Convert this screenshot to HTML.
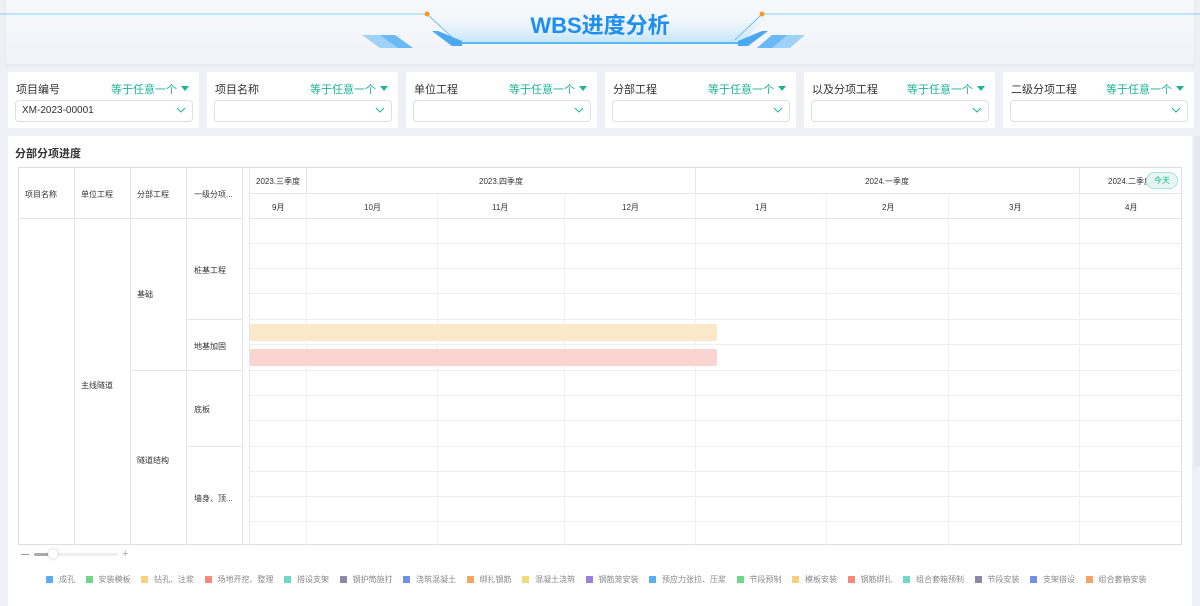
<!DOCTYPE html>
<html><head><meta charset="utf-8"><style>
*{box-sizing:border-box;margin:0;padding:0}
body{width:1200px;height:598px;overflow:hidden;background:#eef0f5;font-family:"Liberation Sans","Noto Sans CJK SC",sans-serif;position:relative;color:#333}
.abs{position:absolute}
.hdr{left:6px;top:0;width:1188px;height:64px;background:linear-gradient(#f6f8fb,#f0f3f8);box-shadow:0 1px 3px rgba(0,0,0,.05)}
.card{top:72px;width:191px;height:56px;background:#fff;border-radius:2px}
.card .lb{position:absolute;left:8px;top:9px;font-size:11px;color:#333}
.card .op{position:absolute;right:10px;top:9px;font-size:11px;color:#1fb39a}
.card .op:after{content:"";display:inline-block;margin-left:4px;border:4px solid transparent;border-top:5px solid #1fb39a;border-bottom:0;vertical-align:2px}
.card .sel{position:absolute;left:7px;top:28px;width:178px;height:22px;border:1px solid #dcdfe6;border-radius:4px;font-size:10px;padding:4px 6px;color:#333}
.card .sel svg{position:absolute;right:6px;top:6px}
.panel{left:8px;top:136px;width:1184px;height:470px;background:#fff}
.tt{left:15px;top:145px;font-size:11px;font-weight:bold;color:#333}
.tbl{left:18px;top:167px;width:1164px;height:378px;border:1px solid #dcdfe6}
.t{position:absolute;font-size:8px;color:#333;white-space:nowrap}
.vl{position:absolute;width:1px;background:#e4e6eb}
.hl{position:absolute;height:1px;background:#eceef2}
.leg{top:574px;font-size:8px;color:#888;white-space:nowrap}
.leg span{display:inline-block;margin-right:10.5px}
.leg i{display:inline-block;width:7px;height:7px;margin-right:6px;vertical-align:-1px}
</style></head><body>
<div class="abs hdr"></div>
<svg class="abs" style="left:0;top:0" width="1200" height="64">
<defs><linearGradient id="g1" x1="0" x2="0" y1="0" y2="1"><stop offset="0" stop-color="#e8f4fd" stop-opacity="0"/><stop offset="1" stop-color="#bfe3fb"/></linearGradient></defs>
<polygon points="430,14 770,14 740,44 460,44" fill="url(#g1)"/>
<line x1="0" y1="14" x2="427" y2="14" stroke="#8fd0f5" stroke-width="1"/>
<line x1="762" y1="14" x2="1200" y2="14" stroke="#8fd0f5" stroke-width="1"/>
<line x1="427" y1="14" x2="455" y2="40" stroke="#6fc0f0"/>
<line x1="762" y1="14" x2="735" y2="40" stroke="#6fc0f0"/>
<circle cx="427" cy="14" r="2.5" fill="#f39b21"/><circle cx="762" cy="14" r="2.5" fill="#f39b21"/>
<line x1="462" y1="43" x2="738" y2="43" stroke="#3aa8f5" stroke-width="1.5"/>
<polygon points="432,31 438,31 462,41 462,46 452,46" fill="#4aa8f0"/>
<polygon points="768,31 762,31 738,41 738,46 748,46" fill="#4aa8f0"/>
<polygon points="362,35 395,35 413,48 380,48" fill="#9ed2f8"/>
<polygon points="380,35 395,35 413,48 398,48" fill="#6ab8f4"/>
<polygon points="772,35 805,35 790,48 757,48" fill="#9ed2f8"/>
<polygon points="772,35 787,35 772,48 757,48" fill="#6ab8f4"/>
<text x="600" y="33" text-anchor="middle" font-size="22" font-weight="bold" fill="#1e8ef0" font-family="Liberation Sans,Noto Sans CJK SC,sans-serif">WBS进度分析</text>
</svg>

<div class="abs card" style="left:8px"><div class="lb">项目编号</div><div class="op">等于任意一个</div><div class="sel">XM-2023-00001<svg width="10" height="7"><path d="M1 1l4 4 4-4" stroke="#1fb39a" fill="none"/></svg></div></div>
<div class="abs card" style="left:207px"><div class="lb">项目名称</div><div class="op">等于任意一个</div><div class="sel"><svg width="10" height="7"><path d="M1 1l4 4 4-4" stroke="#1fb39a" fill="none"/></svg></div></div>
<div class="abs card" style="left:406px"><div class="lb">单位工程</div><div class="op">等于任意一个</div><div class="sel"><svg width="10" height="7"><path d="M1 1l4 4 4-4" stroke="#1fb39a" fill="none"/></svg></div></div>
<div class="abs card" style="left:605px"><div class="lb">分部工程</div><div class="op">等于任意一个</div><div class="sel"><svg width="10" height="7"><path d="M1 1l4 4 4-4" stroke="#1fb39a" fill="none"/></svg></div></div>
<div class="abs card" style="left:804px"><div class="lb">以及分项工程</div><div class="op">等于任意一个</div><div class="sel"><svg width="10" height="7"><path d="M1 1l4 4 4-4" stroke="#1fb39a" fill="none"/></svg></div></div>
<div class="abs card" style="left:1003px"><div class="lb">二级分项工程</div><div class="op">等于任意一个</div><div class="sel"><svg width="10" height="7"><path d="M1 1l4 4 4-4" stroke="#1fb39a" fill="none"/></svg></div></div>

<div class="abs panel"></div>
<div class="abs" style="left:1194px;top:136px;width:6px;height:330px;background:#e6e8ec"></div>
<div class="abs tt">分部分项进度</div>
<div class="abs tbl">
<div class="vl" style="left:55px;top:0;height:377px"></div>
<div class="vl" style="left:111px;top:0;height:377px"></div>
<div class="vl" style="left:167px;top:0;height:377px"></div>
<div class="vl" style="left:223px;top:0;height:377px"></div>
<div class="vl" style="left:230px;top:0;height:377px"></div>
<div class="hl" style="left:0;top:50px;width:224px;background:#e4e6eb"></div>
<div class="hl" style="left:111px;top:202px;width:113px;background:#e4e6eb"></div>
<div class="hl" style="left:167px;top:151px;width:57px;background:#e4e6eb"></div>
<div class="hl" style="left:167px;top:278px;width:57px;background:#e4e6eb"></div>
<div class="t" style="left:6px;top:21px">项目名称</div>
<div class="t" style="left:62px;top:21px">单位工程</div>
<div class="t" style="left:118px;top:21px">分部工程</div>
<div class="t" style="left:175px;top:21px">一级分项...</div>
<div class="t" style="left:62px;top:212px">主线隧道</div>
<div class="t" style="left:118px;top:121px">基础</div>
<div class="t" style="left:118px;top:287px">隧道结构</div>
<div class="t" style="left:175px;top:97px">桩基工程</div>
<div class="t" style="left:175px;top:173px">地基加固</div>
<div class="t" style="left:175px;top:236px">底板</div>
<div class="t" style="left:175px;top:325px">墙身、顶...</div>
<div class="hl" style="left:231px;top:25px;width:933px;background:#e4e6eb"></div>
<div class="hl" style="left:231px;top:50px;width:933px;background:#e4e6eb"></div>
<div class="hl" style="left:231px;top:75px;width:933px"></div>
<div class="hl" style="left:231px;top:100px;width:933px"></div>
<div class="hl" style="left:231px;top:125px;width:933px"></div>
<div class="hl" style="left:231px;top:151px;width:933px"></div>
<div class="hl" style="left:231px;top:176px;width:933px"></div>
<div class="hl" style="left:231px;top:202px;width:933px"></div>
<div class="hl" style="left:231px;top:227px;width:933px"></div>
<div class="hl" style="left:231px;top:252px;width:933px"></div>
<div class="hl" style="left:231px;top:278px;width:933px"></div>
<div class="hl" style="left:231px;top:303px;width:933px"></div>
<div class="hl" style="left:231px;top:328px;width:933px"></div>
<div class="hl" style="left:231px;top:353px;width:933px"></div>
<div class="vl" style="left:287px;top:0;height:25px"></div>
<div class="vl" style="left:676px;top:0;height:25px"></div>
<div class="vl" style="left:1060px;top:0;height:25px"></div>
<div class="vl" style="left:287px;top:25px;height:352px;background:#f0f1f4"></div>
<div class="vl" style="left:418px;top:25px;height:352px;background:#f0f1f4"></div>
<div class="vl" style="left:545px;top:25px;height:352px;background:#f0f1f4"></div>
<div class="vl" style="left:676px;top:25px;height:352px;background:#f0f1f4"></div>
<div class="vl" style="left:807px;top:25px;height:352px;background:#f0f1f4"></div>
<div class="vl" style="left:929px;top:25px;height:352px;background:#f0f1f4"></div>
<div class="vl" style="left:1060px;top:25px;height:352px;background:#f0f1f4"></div>
<div class="t" style="left:237px;top:8px">2023.三季度</div>
<div class="t" style="left:460px;top:8px">2023.四季度</div>
<div class="t" style="left:846px;top:8px">2024.一季度</div>
<div class="t" style="left:1089px;top:8px">2024.二季度</div>
<div class="abs" style="left:1127px;top:4px;width:32px;height:17px;border:1px solid #a8e3d6;border-radius:9px;background:#e6f7f3;color:#1fb39a;font-size:8px;text-align:center;line-height:15px">今天</div>
<div class="t" style="left:253px;top:34px">9月</div>
<div class="t" style="left:345px;top:34px">10月</div>
<div class="t" style="left:473px;top:34px">11月</div>
<div class="t" style="left:603px;top:34px">12月</div>
<div class="t" style="left:736px;top:34px">1月</div>
<div class="t" style="left:863px;top:34px">2月</div>
<div class="t" style="left:990px;top:34px">3月</div>
<div class="t" style="left:1106px;top:34px">4月</div>
<div class="abs" style="left:231px;top:156px;width:467px;height:17px;background:#fbe8c8;border-radius:2px"></div>
<div class="abs" style="left:231px;top:181px;width:467px;height:17px;background:#fad4d0;border-radius:2px"></div>
</div>
<div class="abs" style="left:21px;top:554px;width:8px;height:1px;background:#999"></div>
<div class="abs" style="left:34px;top:553px;width:84px;height:3px;background:#eee;border-radius:2px"></div>
<div class="abs" style="left:34px;top:553px;width:16px;height:3px;background:#aaa;border-radius:2px"></div>
<div class="abs" style="left:48px;top:549px;width:10px;height:10px;border-radius:50%;background:#fff;box-shadow:0 0 2px rgba(0,0,0,.3)"></div>
<div class="abs" style="left:122px;top:549px;font-size:11px;color:#aaa;line-height:10px">+</div>
<div class="abs leg" style="left:46px">
<span><i style="background:#5aaef5"></i>成孔</span><span><i style="background:#6fd68a"></i>安装模板</span><span><i style="background:#fbcf7d"></i>钻孔、注浆</span><span><i style="background:#f8897a"></i>场地开挖、整理</span><span><i style="background:#6fd6c8"></i>搭设支架</span><span><i style="background:#8a8aa4"></i>钢护筒施打</span><span><i style="background:#6f92e8"></i>浇筑混凝土</span><span><i style="background:#f2a460"></i>绑扎钢筋</span><span><i style="background:#ecdb7a"></i>混凝土浇筑</span><span><i style="background:#9a80d8"></i>钢筋笼安装</span><span><i style="background:#5aaef5"></i>预应力张拉、压浆</span><span><i style="background:#6fd68a"></i>节段预制</span><span><i style="background:#fbcf7d"></i>模板安装</span><span><i style="background:#f8897a"></i>钢筋绑扎</span><span><i style="background:#6fd6c8"></i>组合套箱预制</span><span><i style="background:#8a8aa4"></i>节段安装</span><span><i style="background:#6f92e8"></i>支架搭设</span><span><i style="background:#f2a460"></i>组合套箱安装</span>
</div>
</body></html>
